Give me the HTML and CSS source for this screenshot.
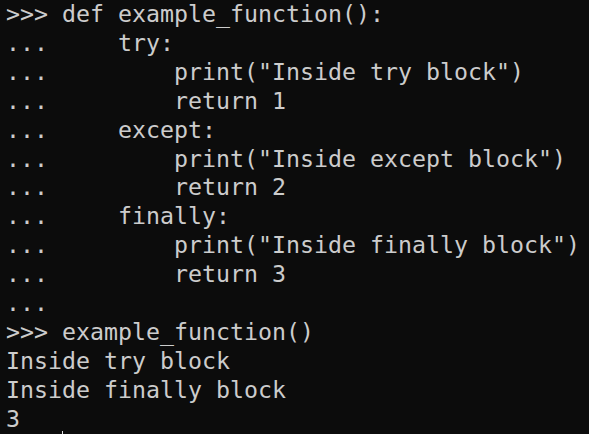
FILE: index.html
```html
<!DOCTYPE html>
<html>
<head>
<meta charset="utf-8">
<link rel="stylesheet" href="styles.css">
</head>
<body>
<div class="term"><pre class="out">&gt;&gt;&gt; def example_function():
...     try:
...         print("Inside try block")
...         return 1
...     except:
...         print("Inside except block")
...         return 2
...     finally:
...         print("Inside finally block")
...         return 3
...
&gt;&gt;&gt; example_function()
Inside try block
Inside finally block
3</pre><span class="caret"></span></div>
</body>
</html>
```
FILE: styles.css
```css
html, body {
  margin: 0;
  padding: 0;
  background: #0c0c0c;
  overflow: hidden;
}
.term {
  position: relative;
  width: 589px;
  height: 434px;
  background: #0c0c0c;
  overflow: hidden;
}
.out {
  margin: 0;
  padding: 0 0 0 6px;
  font-family: "DejaVu Sans Mono", "Liberation Mono", monospace;
  font-size: 23.25px;
  line-height: 28.9px;
  color: #cccccc;
  white-space: pre;
}
.caret {
  position: absolute;
  left: 62px;
  top: 431px;
  width: 1px;
  height: 3px;
  background: #e0e0e0;
}
```
